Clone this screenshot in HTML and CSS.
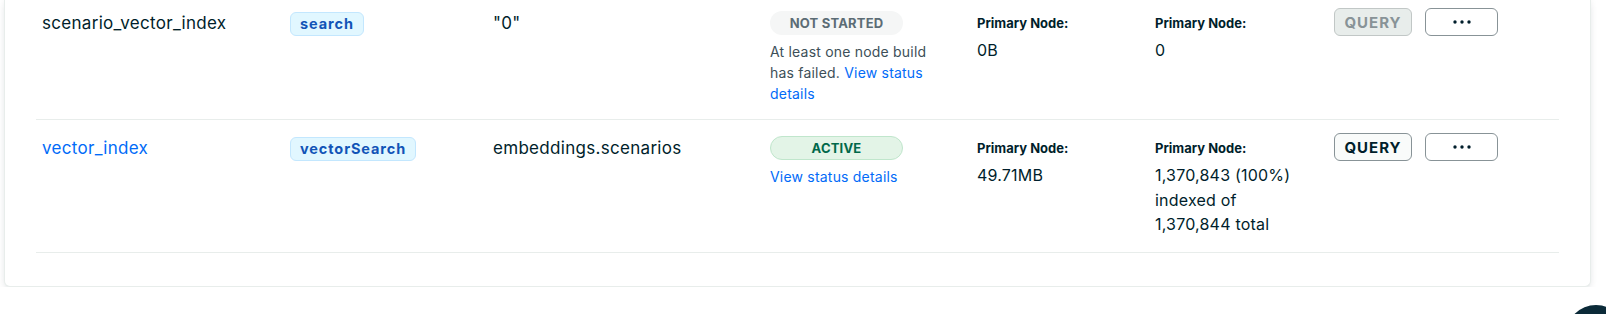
FILE: index.html
```html
<!DOCTYPE html>
<html lang="en">
  <head>
    <title>Search Indexes</title>
    <link rel="stylesheet" href="styles.css">
  </head>
  <body>
    <div class="index-card">
      <table class="index-table">
        <tbody>
          <tr>
            <td class="col-name">scenario_vector_index</td>
            <td class="col-type"><span class="type-badge">search</span></td>
            <td class="col-path">"0"</td>
            <td class="col-status">
              <span class="status-pill pill-idle">NOT STARTED</span>
              <p class="status-text">
                At least one node build has failed.
                <a href="#" class="link">View status details</a>
              </p>
            </td>
            <td class="col-size">
              <div class="node-label">Primary Node:</div>
              <div class="node-value">0B</div>
            </td>
            <td class="col-docs">
              <div class="node-label">Primary Node:</div>
              <div class="node-value">0</div>
            </td>
            <td class="col-actions">
              <div class="actions">
                <button class="btn btn-query" disabled>QUERY</button>
                <button class="btn btn-more" aria-label="More">
                  <svg width="20" height="4" viewBox="0 0 20 4">
                    <circle cx="3" cy="2" r="1.7" />
                    <circle cx="10" cy="2" r="1.7" />
                    <circle cx="17" cy="2" r="1.7" />
                  </svg>
                </button>
              </div>
            </td>
          </tr>
          <tr>
            <td class="col-name"><a href="#" class="link">vector_index</a></td>
            <td class="col-type"><span class="type-badge">vectorSearch</span></td>
            <td class="col-path">embeddings.scenarios</td>
            <td class="col-status">
              <span class="status-pill pill-active">ACTIVE</span>
              <p class="status-text">
                <a href="#" class="link">View status details</a>
              </p>
            </td>
            <td class="col-size">
              <div class="node-label">Primary Node:</div>
              <div class="node-value">49.71MB</div>
            </td>
            <td class="col-docs">
              <div class="node-label">Primary Node:</div>
              <div class="node-value">1,370,843 (100%)<br />indexed of<br />1,370,844 total</div>
            </td>
            <td class="col-actions">
              <div class="actions">
                <button class="btn btn-query">QUERY</button>
                <button class="btn btn-more" aria-label="More">
                  <svg width="20" height="4" viewBox="0 0 20 4">
                    <circle cx="3" cy="2" r="1.7" />
                    <circle cx="10" cy="2" r="1.7" />
                    <circle cx="17" cy="2" r="1.7" />
                  </svg>
                </button>
              </div>
            </td>
          </tr>
        </tbody>
      </table>
    </div>

    <div class="chat-bubble"></div>
  </body>
</html>
```

FILE: styles.css
```css
/* page */
body {
  margin: 0;
  background-color: #fff;
  font-family: "Inter", "Liberation Sans", sans-serif;
  color: #001e2b;
  overflow: hidden;
}

.index-card {
  margin: -5px 15px 0 4px;
  padding: 0 31px 33px 31px;
  background-color: #fff;
  border: 1px solid #e8edeb;
  border-top: none;
  border-radius: 0 0 6px 6px;
  box-shadow: 0 4px 10px -4px rgba(0, 30, 43, 0.3);
}

.index-table {
  width: 100%;
  border-collapse: collapse;
  table-layout: fixed;
}

.index-table td {
  box-sizing: border-box;
  vertical-align: top;
  padding: 16px 0 15px 6px;
  border-bottom: 1px solid #e8edeb;
  font-size: 17px;
  letter-spacing: 0.3px;
  line-height: 24px;
}

.col-name {
  width: 248px;
}

.col-type {
  width: 203px;
}

.col-path {
  width: 277px;
}

.col-status {
  width: 207px;
}

.col-size {
  width: 178px;
}

.col-docs {
  width: 179px;
}

.link {
  color: #016bf8;
  text-decoration: none;
}

.type-badge {
  display: inline-block;
  padding: 0 9px;
  height: 22px;
  line-height: 22px;
  font-size: 14.5px;
  font-weight: 700;
  letter-spacing: 0.9px;
  color: #1254b7;
  background-color: #e1f7ff;
  border: 1px solid #c3e7fe;
  border-radius: 6px;
}

.status-pill {
  display: block;
  box-sizing: border-box;
  width: 133px;
  height: 24px;
  line-height: 22px;
  text-align: center;
  font-size: 13px;
  font-weight: 700;
  letter-spacing: 0.2px;
  border-radius: 12px;
  border: 1px solid transparent;
}

.pill-idle {
  color: #5c6c75;
  background-color: #f5f6f6;
}

.pill-active {
  color: #00684a;
  background-color: #e3f4e7;
  border-color: #c0e6cc;
}

.status-text {
  margin: 6px 0 0;
  font-size: 14px;
  letter-spacing: 0.2px;
  line-height: 21px;
  color: #3d4f58;
  width: 168px;
}

.node-label {
  font-size: 13px;
  font-weight: 700;
  letter-spacing: 0;
}

.node-value {
  margin-top: 3px;
  font-size: 16px;
  letter-spacing: 0.2px;
  line-height: 24.5px;
}

.index-table td.col-actions {
  padding-top: 13px;
}

.actions {
  display: flex;
  gap: 13px;
}

.btn {
  box-sizing: border-box;
  height: 28px;
  padding: 0;
  border-radius: 6px;
  font-family: inherit;
  cursor: pointer;
}

.btn-query {
  width: 78px;
  font-size: 15px;
  font-weight: 700;
  letter-spacing: 1px;
  color: #001e2b;
  background-color: #f9fbfa;
  border: 1px solid #889397;
}

.btn-query:disabled {
  color: #889397;
  background-color: #e8edeb;
  border-color: #c1c7c6;
  cursor: default;
}

.btn-more {
  width: 73px;
  background-color: #fff;
  border: 1px solid #889397;
  fill: #001e2b;
}

.btn-more svg {
  display: block;
  margin: 0 auto;
}

.chat-bubble {
  position: absolute;
  left: 1566px;
  top: 305px;
  width: 60px;
  height: 60px;
  border-radius: 50%;
  background-color: #0b2a38;
}
```
